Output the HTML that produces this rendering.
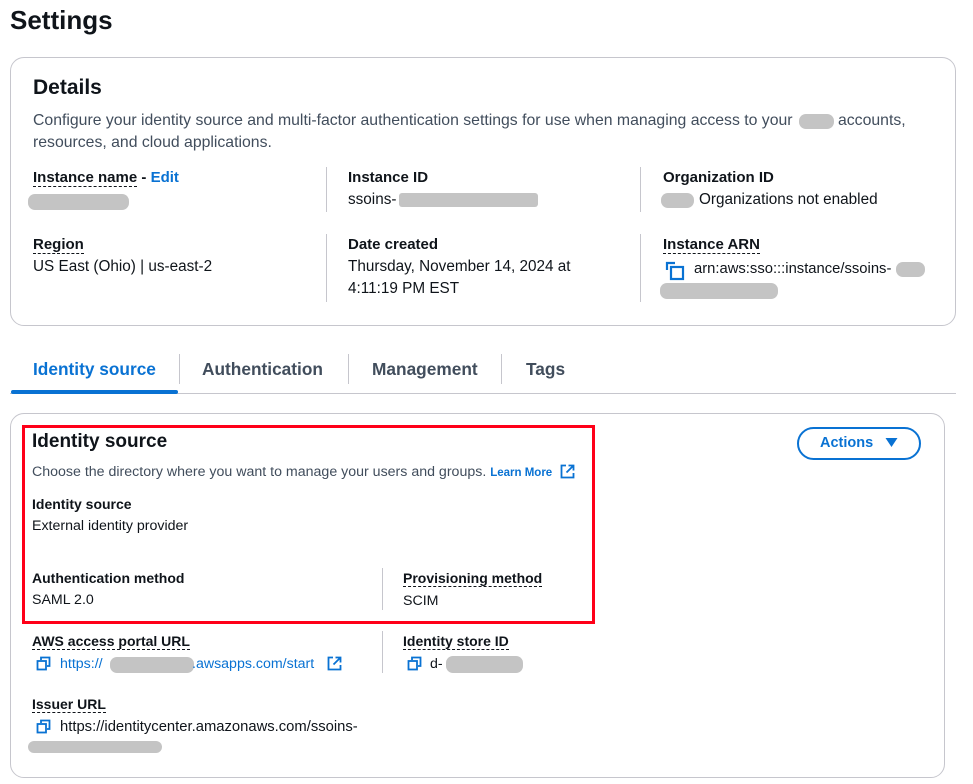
<!DOCTYPE html>
<html><head><meta charset="utf-8"><style>
*{margin:0;padding:0;box-sizing:border-box}
body{width:973px;height:784px;background:#fff;position:relative;overflow:hidden;font-family:"Liberation Sans","DejaVu Sans",sans-serif;color:#0f141a}
.t{position:absolute;white-space:nowrap;line-height:20px}
.lb{font-weight:bold;font-size:15px}
.v{font-size:15.3px;color:#0f141a}
.d{font-size:15.8px;color:#414d5c}
.u{border-bottom:1px dashed #0f141a;padding-bottom:0;line-height:17px}
.blur{position:absolute;background:#c4c4c4;border-radius:7px}
.vd{position:absolute;width:1px;background:#c6c6cd}
.s{font-size:14.2px}
.sl{font-weight:bold;font-size:14px}
.blue{color:#0972d3}
svg{position:absolute}
</style></head><body>
<div class="t" style="left:10px;top:4px;font-size:26px;font-weight:bold;line-height:32px">Settings</div>

<div style="position:absolute;left:10px;top:57px;width:946px;height:269px;border:1px solid #c6c6cd;border-radius:14px"></div>
<div class="t" style="left:33px;top:74px;font-size:21px;font-weight:bold;line-height:28px">Details</div>
<div class="t d" style="left:33px;top:111px">Configure your identity source and multi-factor authentication settings for use when managing access to your</div>
<div class="blur" style="left:799px;top:114px;width:35px;height:15px"></div>
<div class="t d" style="left:838px;top:111px">accounts,</div>
<div class="t d" style="left:33px;top:133px">resources, and cloud applications.</div>

<div class="vd" style="left:326px;top:167px;height:45px"></div>
<div class="vd" style="left:640px;top:167px;height:45px"></div>
<div class="vd" style="left:326px;top:234px;height:68px"></div>
<div class="vd" style="left:640px;top:234px;height:68px"></div>

<div class="t lb" style="left:33px;top:168px"><span class="u">Instance name</span> - <span class="blue">Edit</span></div>
<div class="blur" style="left:28px;top:194px;width:101px;height:16px"></div>
<div class="t lb" style="left:348px;top:168px">Instance ID</div>
<div class="t v" style="left:348px;top:190px">ssoins-</div>
<div class="blur" style="left:399px;top:193px;width:139px;height:14px;border-radius:3px"></div>
<div class="t lb" style="left:663px;top:168px">Organization ID</div>
<div class="blur" style="left:661px;top:193px;width:33px;height:15px"></div>
<div class="t v" style="left:699px;top:190px">Organizations not enabled</div>

<div class="t lb" style="left:33px;top:235px"><span class="u">Region</span></div>
<div class="t v" style="left:33px;top:257px">US East (Ohio) | us-east-2</div>
<div class="t lb" style="left:348px;top:235px">Date created</div>
<div class="t v" style="left:348px;top:257px">Thursday, November 14, 2024 at</div>
<div class="t v" style="left:348px;top:279px">4:11:19 PM EST</div>
<div class="t lb" style="left:663px;top:235px"><span class="u">Instance ARN</span></div>
<svg style="left:665px;top:261px" width="20" height="20" viewBox="0 0 20 20"><path d="M2 9V2h8" fill="none" stroke="#0972d3" stroke-width="2.2"/><rect x="6" y="6" width="12" height="12" fill="none" stroke="#0972d3" stroke-width="2.2"/></svg>
<div class="t v" style="left:694px;top:259px;font-size:14.8px">arn:aws:sso:::instance/ssoins-</div>
<div class="blur" style="left:896px;top:262px;width:29px;height:15px"></div>
<div class="blur" style="left:660px;top:283px;width:118px;height:16px"></div>

<div class="t" style="left:33px;top:357px;font-size:17.3px;font-weight:bold;line-height:24px;color:#0972d3">Identity source</div>
<div class="t" style="left:202px;top:357px;font-size:17.3px;font-weight:bold;line-height:24px;color:#414d5c">Authentication</div>
<div class="t" style="left:372px;top:357px;font-size:17.3px;font-weight:bold;line-height:24px;color:#414d5c">Management</div>
<div class="t" style="left:526px;top:357px;font-size:17.3px;font-weight:bold;line-height:24px;color:#414d5c">Tags</div>
<div class="vd" style="left:179px;top:354px;height:30px"></div>
<div class="vd" style="left:348px;top:354px;height:30px"></div>
<div class="vd" style="left:501px;top:354px;height:30px"></div>
<div style="position:absolute;left:10px;top:393px;width:946px;height:1px;background:#c6c6cd"></div>
<div style="position:absolute;left:11px;top:390px;width:167px;height:4px;background:#0972d3;border-radius:2px"></div>

<div style="position:absolute;left:10px;top:413px;width:935px;height:365px;border:1px solid #c6c6cd;border-radius:14px"></div>
<div style="position:absolute;left:22px;top:425px;width:573px;height:199px;border:3px solid #ff0018"></div>
<div style="position:absolute;left:797px;top:427px;width:124px;height:33px;border:2px solid #0972d3;border-radius:17px"></div>
<div class="t" style="left:820px;top:433px;font-size:14.5px;font-weight:bold;color:#0972d3">Actions</div>
<svg style="left:885px;top:437px" width="13" height="11" viewBox="0 0 13 11"><path d="M0.5 1h12L6.5 10z" fill="#0972d3"/></svg>

<div class="t" style="left:32px;top:430px;font-size:19px;font-weight:bold;line-height:24px">Identity source</div>
<div class="t s" style="left:32px;top:462px;color:#414d5c">Choose the directory where you want to manage your users and groups. <b class="blue" style="font-size:11.5px">Learn More</b></div>
<svg style="left:560px;top:464px" width="15" height="15" viewBox="0 0 15 15"><path d="M6 1.5H1.5v12h12V9M8.5 1.5h5v5M13.5 1.5L6.5 8.5" fill="none" stroke="#0972d3" stroke-width="1.8"/></svg>
<div class="t sl" style="left:32px;top:494px">Identity source</div>
<div class="t s" style="left:32px;top:516px">External identity provider</div>
<div class="vd" style="left:382px;top:568px;height:42px"></div>
<div class="t sl" style="left:32px;top:568px">Authentication method</div>
<div class="t s" style="left:32px;top:590px">SAML 2.0</div>
<div class="t sl" style="left:403px;top:568px"><span class="u">Provisioning method</span></div>
<div class="t s" style="left:403px;top:591px">SCIM</div>

<div class="vd" style="left:382px;top:631px;height:42px"></div>
<div class="t sl" style="left:32px;top:631px"><span class="u">AWS access portal URL</span></div>
<svg style="left:36px;top:656px" width="15" height="15" viewBox="0 0 15 15"><path d="M5 4V1.5h8.5V10H11" fill="none" stroke="#0972d3" stroke-width="1.8"/><rect x="1.5" y="5" width="8.5" height="8.5" fill="none" stroke="#0972d3" stroke-width="1.8"/></svg>
<div class="t s blue" style="left:60px;top:654px">https://</div>
<div class="blur" style="left:110px;top:657px;width:84px;height:16px"></div>
<div class="t s blue" style="left:192px;top:654px">.awsapps.com/start</div>
<svg style="left:327px;top:656px" width="15" height="15" viewBox="0 0 15 15"><path d="M6 1.5H1.5v12h12V9M8.5 1.5h5v5M13.5 1.5L6.5 8.5" fill="none" stroke="#0972d3" stroke-width="1.8"/></svg>
<div class="t sl" style="left:403px;top:631px"><span class="u">Identity store ID</span></div>
<svg style="left:407px;top:656px" width="15" height="15" viewBox="0 0 15 15"><path d="M5 4V1.5h8.5V10H11" fill="none" stroke="#0972d3" stroke-width="1.8"/><rect x="1.5" y="5" width="8.5" height="8.5" fill="none" stroke="#0972d3" stroke-width="1.8"/></svg>
<div class="t s" style="left:430px;top:654px">d-</div>
<div class="blur" style="left:446px;top:656px;width:77px;height:17px"></div>

<div class="t sl" style="left:32px;top:694px"><span class="u">Issuer URL</span></div>
<svg style="left:36px;top:719px" width="15" height="15" viewBox="0 0 15 15"><path d="M5 4V1.5h8.5V10H11" fill="none" stroke="#0972d3" stroke-width="1.8"/><rect x="1.5" y="5" width="8.5" height="8.5" fill="none" stroke="#0972d3" stroke-width="1.8"/></svg>
<div class="t s" style="left:60px;top:717px;font-size:14.8px">https://identitycenter.amazonaws.com/ssoins-</div>
<div class="blur" style="left:28px;top:741px;width:134px;height:12px"></div>
</body></html>
